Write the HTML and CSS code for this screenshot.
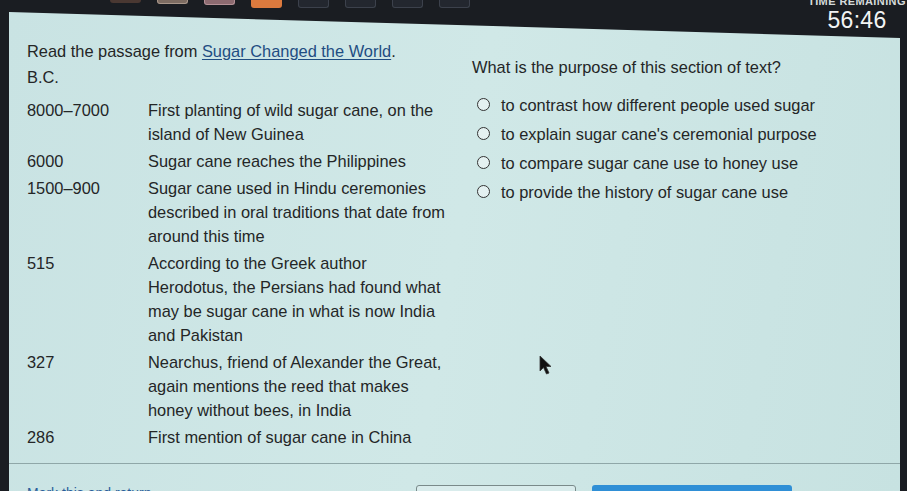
FILE: index.html
```html
<!DOCTYPE html>
<html>
<head>
<meta charset="utf-8">
<link rel="stylesheet" href="styles.css">
</head>
<body>
<header class="topbar">
  <div class="tabs">
    <span class="tab tab-brown"></span>
    <span class="tab tab-tan"></span>
    <span class="tab tab-pink"></span>
    <span class="tab tab-orange"></span>
    <span class="tab tab-dark"></span>
    <span class="tab tab-dark"></span>
    <span class="tab tab-dark"></span>
    <span class="tab tab-dark"></span>
  </div>
</header>
<div class="timer">
  <span class="timer-label">TIME REMAINING</span>
  <span class="timer-value">56:46</span>
</div>
<main class="panel">
  <div class="columns">
    <section class="passage">
      <p class="intro">Read the passage from <span class="title">Sugar Changed the World</span>.</p>
      <p class="era">B.C.</p>
      <div class="timeline">
        <div class="date">8000–7000</div>
        <div class="event">First planting of wild sugar cane, on the island of New Guinea</div>
        <div class="date">6000</div>
        <div class="event">Sugar cane reaches the Philippines</div>
        <div class="date">1500–900</div>
        <div class="event">Sugar cane used in Hindu ceremonies described in oral traditions that date from around this time</div>
        <div class="date">515</div>
        <div class="event">According to the Greek author Herodotus, the Persians had found what may be sugar cane in what is now India and Pakistan</div>
        <div class="date">327</div>
        <div class="event">Nearchus, friend of Alexander the Great, again mentions the reed that makes honey without bees, in India</div>
        <div class="date">286</div>
        <div class="event">First mention of sugar cane in China</div>
      </div>
    </section>
    <section class="question">
      <p class="prompt">What is the purpose of this section of text?</p>
      <ul class="options">
        <li class="option"><span class="radio"></span>to contrast how different people used sugar</li>
        <li class="option"><span class="radio"></span>to explain sugar cane's ceremonial purpose</li>
        <li class="option"><span class="radio"></span>to compare sugar cane use to honey use</li>
        <li class="option"><span class="radio"></span>to provide the history of sugar cane use</li>
      </ul>
    </section>
  </div>
  <div class="footer">
    <span class="mark">Mark this and return</span>
    <span class="btn-box"></span>
    <span class="btn-blue"></span>
  </div>
  <svg class="cursor" width="14" height="20" viewBox="0 0 14 20"><path d="M1 1 L1 16 L4.5 12.5 L7.5 19 L10 18 L7 11.5 L12 11.5 Z" fill="#111" stroke="#333" stroke-width="0.8"/></svg>
</main>
</body>
</html>
```
FILE: styles.css
```css
* { box-sizing: border-box; }
html, body { margin: 0; padding: 0; }
body {
  position: relative;
  width: 907px;
  height: 491px;
  overflow: hidden;
  background: #1a1d22;
  font-family: "Liberation Sans", Arial, sans-serif;
  color: #242627;
}
.topbar {
  height: 12px;
  padding-left: 110px;
}
.tabs { display: flex; gap: 16px; align-items: flex-start; }
.tab { width: 31px; height: 5px; border-radius: 0 0 3px 3px; }
.tab-brown { background: #4a3832; height: 3px; }
.tab-tan { background: #7d6c62; border: 1px solid #a8968a; border-top: 0; height: 4px; }
.tab-pink { background: #8c6a70; border: 1px solid #b49096; border-top: 0; }
.tab-orange { background: #dc7a3e; height: 8px; }
.tab-dark { background: #23272f; border: 1px solid #3c414c; border-top: 0; height: 8px; }
.timer {
  position: absolute;
  top: -5px;
  right: 0;
  width: 100px;
  display: flex;
  flex-direction: column;
  align-items: center;
  color: #f2f4f4;
}
.timer-label { font-size: 11px; line-height: 12px; font-weight: bold; letter-spacing: 0.4px; color: #d5dada; white-space: nowrap; }
.timer-value { font-size: 23px; line-height: 26px; letter-spacing: 0.3px; }
.panel {
  position: relative;
  margin: 0 7px 0 9px;
  height: 479px;
  display: flex;
  flex-direction: column;
  background: linear-gradient(100deg, #c9e3e3 0%, #d0e8e7 50%, #c7e2e1 100%);
  padding: 28px 0 0 18px;
  clip-path: polygon(0 0, 100% 26px, 100% 100%, 0 100%);
}
.columns { display: flex; font-size: 16.4px; }
.passage { width: 445px; }
.intro { margin: 0; line-height: 22px; }
.title { color: #1f4d82; text-decoration: underline; text-underline-offset: 2px; }
.era { margin: 4px 0 0; line-height: 22px; }
.timeline {
  display: grid;
  grid-template-columns: 121px 300px;
  row-gap: 3px;
  margin-top: 10px;
  line-height: 24px;
}
.question { padding-top: 16px; }
.prompt { margin: 0; line-height: 22px; }
.options { list-style: none; margin: 12px 0 0; padding: 0 0 0 5px; }
.option {
  display: flex;
  align-items: center;
  gap: 11px;
  line-height: 22px;
  height: 29px;
}
.radio {
  width: 13px;
  height: 13px;
  border: 1.6px solid #333;
  border-radius: 50%;
  background: #e4f1f1;
  flex: none;
}
.footer {
  margin-top: auto;
  margin-left: -18px;
  border-top: 1px solid #8fa7a8;
  height: 28px;
  display: flex;
  align-items: flex-start;
  padding-top: 21px;
}
.mark { color: #2a5d9a; font-size: 14px; line-height: 16px; padding-left: 18px; width: 407px; }
.btn-box { width: 160px; height: 14px; border: 1px solid #7a8a8a; border-radius: 3px; background: #d9ecec; }
.btn-blue { width: 200px; height: 14px; margin-left: 16px; background: #2f8fd6; border-radius: 3px; }
.cursor { position: absolute; left: 530px; top: 343px; }
```
